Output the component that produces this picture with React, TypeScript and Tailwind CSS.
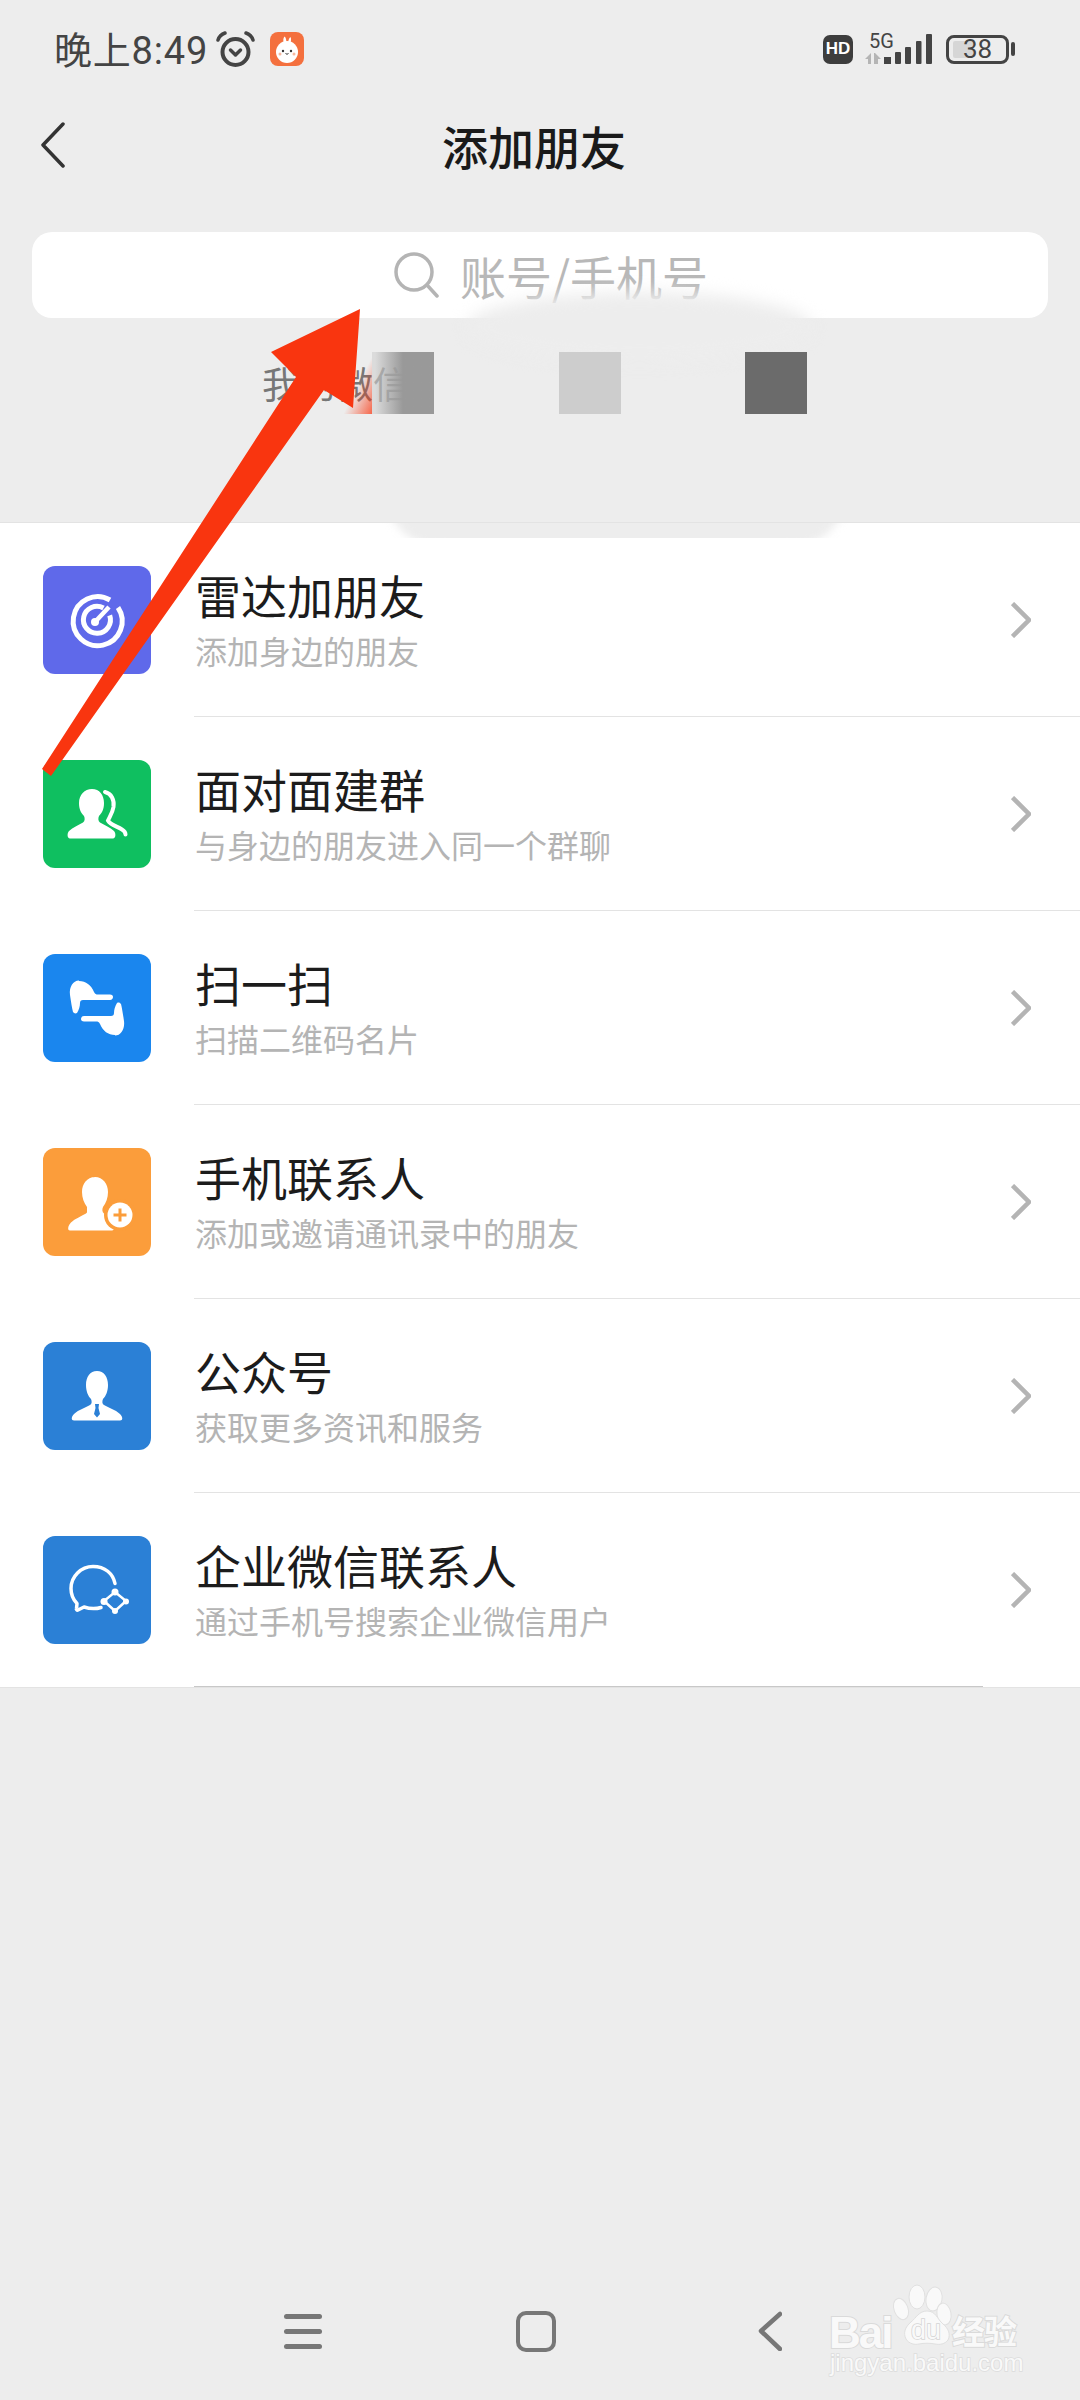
import React from "react";

const CJK = "font-['Noto_Sans_CJK_SC','Noto_Sans',sans-serif]";

function RadarIcon() {
  return (
    <svg viewBox="0 0 108 108" className="w-full h-full" fill="none" stroke="#fff" strokeLinecap="butt">
      <path d="M67 34A24.500 24.500 0 1 0 75 41.500" strokeWidth="5" />
      <path d="M60.500 42A13.500 13.500 0 1 0 66.700 49.400" strokeWidth="5" />
      <path d="M52 56L66 41" strokeWidth="4.500" />
      <circle cx="52" cy="56" r="4" fill="#fff" stroke="none" />
    </svg>
  );
}

function GroupIcon() {
  return (
    <svg viewBox="0 0 108 108" className="w-full h-full" fill="#fff">
      <path d="M49 29c-7.500 0-13 6-13 14 0 6 2 10 5 13 1 2 1 5-1 6.500-5 3-10 4.500-14 8.500-2 2-2 7.500 1 7.500h43c3 0 3-5.500 1-7.500-4-4-9-5.500-14-8.500-2-1.500-2-4.500-1-6.500 3-3 5-7 5-13 0-8-4.500-14-12-14z" />
      <path d="M62 32c6.500 1.500 9.500 8 8.500 15-1 6-4 10-5.500 13.500 2 4 8 5.500 14 9 2.500 1.500 3.500 3 3.500 5" fill="none" stroke="#fff" strokeWidth="4" strokeLinecap="round" />
    </svg>
  );
}

function ScanIcon() {
  const half = "M36 27c7 0 12 4 15 11 1 2 2 2.500 4 2.500h12c2 0 3 1 3 2.500s-1 3-3 3H40c-2 0-3 1-3 3 0 3-1 7-3 10-2 1-3 0-4-1-1-4-2-10-3-17-1-8 3-14.500 9-14.500z";
  return (
    <svg viewBox="0 0 108 108" className="w-full h-full" fill="#fff">
      <path d={half} />
      <path d={half} transform="rotate(180 54 54)" />
    </svg>
  );
}

function AddContactIcon() {
  return (
    <svg viewBox="0 0 108 108" className="w-full h-full">
      <path fill="#fff" d="M52 29c-8 0-13 7-13 15 0 6 2 11 5 15 1 2 1 5-1 6.500-5 3-11 5-15 9-3 3-4 8-1 8h42c3 0 3-5 1-8-4-4-9-6-15-9-2-1.500-2-4.500-1-6.500 3-4 5-9 5-15 0-8-5-15-8-15z" />
      <path fill="#fff" d="M52 29c8 0 13 7 13 15 0 6-2 11-5 15-1 2-1 5 1 6.500l6 4-5 12H44V60l8-31z" />
      <circle cx="77" cy="67" r="16" fill="#fb9d3b" />
      <circle cx="77" cy="67" r="12.500" fill="#fff" />
      <path d="M77 60.500v13M70.500 67h13" stroke="#fb9d3b" strokeWidth="3" />
    </svg>
  );
}

function OfficialIcon() {
  return (
    <svg viewBox="0 0 108 108" className="w-full h-full">
      <path fill="#fff" d="M54 29c-7 0-11 6-11 14 0 6 2 11 5 14 1 2 1 5-1 6-5 3-11 4.500-16 9-3 3-3 6.500 0 6.500h46c3 0 3-3.500 0-6.500-5-4.500-11-6-16-9-2-1-2-4-1-6 3-3 5-8 5-14 0-8-4-14-11-14z" />
      <path fill="#2b80d6" d="M52 62h4l-.5 4 1.500 6-3 3.500-3-3.500 1.500-6z" />
    </svg>
  );
}

function WorkChatIcon() {
  return (
    <svg viewBox="0 0 108 108" className="w-full h-full" fill="none" stroke="#fff">
      <path d="M58 71.500c-5 1.500-11 1.500-17-.5l-6 3c-1 .5-2-.5-1.500-1.500l.5-5c-4-4-6-9-6-15 0-12 10-22 22-22s20 7 22 17" strokeWidth="3.500" strokeLinecap="round" strokeLinejoin="round" />
      <path d="M72 56L83 65 72 75 61 65z" strokeWidth="2.500" />
      <circle cx="72" cy="56" r="3.500" fill="#fff" stroke="none" />
      <circle cx="83" cy="65.500" r="3" fill="#fff" stroke="none" />
      <circle cx="72" cy="75" r="3" fill="#fff" stroke="none" />
      <circle cx="61" cy="65.500" r="3.500" fill="#fff" stroke="none" />
    </svg>
  );
}

const rows = [
  { title: "雷达加朋友", sub: "添加身边的朋友", bg: "bg-[#5f69ea]", icon: <RadarIcon /> },
  { title: "面对面建群", sub: "与身边的朋友进入同一个群聊", bg: "bg-[#0fbf60]", icon: <GroupIcon /> },
  { title: "扫一扫", sub: "扫描二维码名片", bg: "bg-[#1a86ee]", icon: <ScanIcon /> },
  { title: "手机联系人", sub: "添加或邀请通讯录中的朋友", bg: "bg-[#fb9d3b]", icon: <AddContactIcon /> },
  { title: "公众号", sub: "获取更多资讯和服务", bg: "bg-[#2b80d6]", icon: <OfficialIcon /> },
  { title: "企业微信联系人", sub: "通过手机号搜索企业微信用户", bg: "bg-[#2b80d6]", icon: <WorkChatIcon /> },
];

function Chevron() {
  return (
    <svg width="20" height="36" viewBox="0 0 20 36" fill="none" stroke="#b4b4b4" strokeWidth="4.500">
      <path d="M1.500 1.500L18 18 1.500 34.500" />
    </svg>
  );
}

function StatusBar() {
  return (
    <div className="h-[98px] flex items-center pl-[54px] pr-[65px] text-[#444]">
      <span className="mt-[3px] text-[38px] leading-[44px] font-['Roboto','Noto_Sans_CJK_SC',sans-serif] tracking-[0.8px]">晚上8:49</span>
      <svg className="ml-[8px]" width="39" height="36" viewBox="0 0 39 36" fill="none" stroke="#444">
        <circle cx="19.500" cy="21" r="13" strokeWidth="4" />
        <path d="M2 9c1-3 4-6 7-7M37 9c-1-3-4-6-7-7" strokeWidth="3.500" strokeLinecap="round" />
        <path d="M14.500 19l5 5 5-5" strokeWidth="3.500" strokeLinecap="round" strokeLinejoin="round" />
      </svg>
      <svg className="ml-[15px]" width="34" height="34" viewBox="0 0 34 34">
        <rect width="34" height="34" rx="8" fill="#f4703e" />
        <path d="M14 12c-1-3-1-6 .5-7.500 1.500 1 2 4 2 7zM18 12c0-3 1-6 2.500-7 1 1.500.5 5-.5 7.500z" fill="#fff" />
        <circle cx="17" cy="20" r="11" fill="#fff" />
        <circle cx="13" cy="19" r="1.200" fill="#333" />
        <circle cx="21" cy="19" r="1.200" fill="#333" />
        <path d="M15.500 21.500q1.500 1.500 3 0" stroke="#333" strokeWidth="1" fill="none" />
        <circle cx="10" cy="22" r="1.500" fill="#f7b9a0" />
        <circle cx="24" cy="22" r="1.500" fill="#f7b9a0" />
      </svg>

      <div className="ml-auto flex items-center">
        <div className="w-[30px] h-[29px] rounded-[7px] bg-[#3d3d3d] flex items-center justify-center text-white text-[17px] font-bold font-['Liberation_Sans',sans-serif]">HD</div>
        <div className="relative ml-[12px] w-[67px] h-[31px]">
          <span className="absolute left-[4px] top-[-5px] text-[20px] leading-[24px] font-['Roboto',sans-serif]">5G</span>
          <svg width="67" height="31" viewBox="0 0 67 31" className="absolute left-0 top-0">
            <path d="M0 25l6-6v11H3v-5zM9 19h1l6 6h-3v5H9z" fill="#b5b5b5" />
            <rect x="19" y="23" width="7" height="7" fill="#444" />
            <rect x="30" y="18" width="6" height="12" rx="1" fill="#444" />
            <rect x="40" y="13" width="6" height="17" rx="1" fill="#444" />
            <rect x="51" y="7" width="5.500" height="23" rx="1" fill="#444" />
            <rect x="61" y="0" width="6" height="30" rx="1" fill="#444" />
          </svg>
        </div>
        <div className="relative ml-[14px] w-[63px] h-[29px] rounded-[8px] border-[3.5px] border-[#444] flex items-center justify-center">
          <div className="absolute left-[4px] top-[3px] bottom-[3px] w-[20px] rounded-[2px] bg-[#d6d6d6]" />
          <span className="relative text-[26px] leading-none font-['Roboto',sans-serif]">38</span>
        </div>
        <div className="ml-[2px] w-[4px] h-[14px] rounded-[2px] bg-[#444]" />
      </div>
    </div>
  );
}

function Arrow() {
  return (
    <svg className="absolute left-0 top-0 pointer-events-none" width="400" height="800" viewBox="0 0 400 800">
      <polygon points="360,309 271,352 296,377 42,769 51,776 324,390 353,408" fill="#f9350f" />
    </svg>
  );
}

function Watermark() {
  const outline = "text-[#f9f9f9] [-webkit-text-stroke:2px_#dadada] [paint-order:stroke_fill]";
  return (
    <div className="absolute left-[828px] top-[2284px] w-[196px] h-[96px]">
      <svg className="absolute left-0 top-0" width="196" height="70" viewBox="0 0 196 70" fill="#f9f9f9" stroke="#e0e0e0" strokeWidth="1">
        <ellipse cx="89" cy="13" rx="8" ry="12" />
        <ellipse cx="106" cy="15" rx="8" ry="12" transform="rotate(10 106 15)" />
        <ellipse cx="73" cy="25" rx="7" ry="11" transform="rotate(-20 73 25)" />
        <ellipse cx="116" cy="30" rx="7" ry="11" transform="rotate(-10 116 30)" />
        <path d="M99 27c-8 0-11 7-16 11-6 5-8 11-5 17 3 5 9 6 13 5 5-1 11-1 16 0 5 1 10 0 13-4 3-6 0-12-5-16-6-5-7-13-16-13z" />
      </svg>
      <span className={`absolute left-[1px] top-[30px] text-[44px] leading-[38px] font-bold tracking-[-2px] font-['Liberation_Sans',sans-serif] ${outline}`}>Bai</span>
      <span className="absolute left-[83px] top-[31px] text-[27px] leading-[30px] font-['Liberation_Sans',sans-serif] text-[#f9f9f9] [-webkit-text-stroke:1.500px_#d4d4d4] [paint-order:stroke_fill]">du</span>
      <span className={`absolute left-[124px] top-[28px] text-[33px] leading-[36px] font-bold tracking-[-1px] ${CJK} ${outline}`}>经验</span>
      <span className="absolute left-[2px] top-[69px] text-[24px] leading-[20px] font-['Liberation_Sans',sans-serif] text-[#f9f9f9] [-webkit-text-stroke:1.500px_#dcdcdc] [paint-order:stroke_fill]">jingyan.baidu.com</span>
    </div>
  );
}

export default function App() {
  return (
    <div className={`relative w-[1080px] h-[2400px] overflow-hidden bg-[#ededed] flex flex-col ${CJK}`}>
      <StatusBar />

      <header className="h-[98px] relative flex items-center justify-center pr-[12px] pb-[5px]">
        <svg className="absolute left-[40px] top-[24px]" width="26" height="46" viewBox="0 0 26 46" fill="none" stroke="#333" strokeWidth="3.500" strokeLinecap="round" strokeLinejoin="round">
          <path d="M23 2L3 23l20 21" />
        </svg>
        <h1 className="text-[46px] leading-[56px] font-medium text-[#1a1a1a]">添加朋友</h1>
      </header>

      <div className="relative mx-[32px] mt-[36px] h-[86px] rounded-[20px] bg-white flex items-center pl-[362px]">
        <svg width="46" height="46" viewBox="0 0 46 46" fill="none" stroke="#b4b4b4" strokeWidth="3.500" strokeLinecap="round">
          <circle cx="20" cy="20" r="18" />
          <path d="M33 33l10 11" />
        </svg>
        <span className="ml-[20px] text-[46px] leading-[56px] text-[#b8b8b8]">账号/手机号</span>
        <div className="absolute left-[435px] top-[60px] w-[345px] h-[70px] rounded-[50%] bg-[#ededed] blur-[8px]" />
      </div>

      <div className="relative z-10 mt-[34px] h-[62px] pl-[262px] flex items-center">
        <div className="w-[110px] whitespace-nowrap text-[37px] leading-[44px] text-[#777]">我的微信</div>
        <div className="relative w-[62px] h-[62px] bg-linear-to-r from-[#cfcfcf99] from-5% to-[#999999] to-50%" />
        <div className="ml-[125px] w-[62px] h-[62px] bg-[#cdcdcd]" />
        <div className="ml-[124px] w-[62px] h-[62px] bg-[#6b6b6b]" />
      </div>

      <div className="relative z-10 mt-[108px] bg-white border-t border-b border-t-[#e3e3e3] border-b-[#e3e3e3]">
        {rows.map((row, i) => {
          const last = i === rows.length - 1;
          return (
            <div key={row.title} className="h-[194px] flex">
              <div className="w-[194px] shrink-0 pl-[43px] flex items-center">
                <div className={`w-[108px] h-[108px] rounded-[12px] ${row.bg}`}>{row.icon}</div>
              </div>
              <div className={last ? "flex-1 flex items-center mr-[97px] border-b border-[#c8c8c8]" : "flex-1 flex items-center pr-[49px] border-b border-[#e3e3e3]"}>
                <div className="flex-1 min-w-0 flex flex-col pl-[1px] pb-[1px]">
                  <div className="text-[46px] leading-[52px] text-[#1c1c1c]">{row.title}</div>
                  <div className="mt-[10px] text-[32px] leading-[40px] text-[#b4b4b4]">{row.sub}</div>
                </div>
                <div className={last ? "-mr-[48px]" : ""}>
                  <Chevron />
                </div>
              </div>
            </div>
          );
        })}
      </div>

      {/* Rubbed-out patch across the top of the card */}
      <div className="absolute z-10 left-[370px] top-[523px] w-[500px] h-[15px] overflow-hidden">
        <div className="absolute left-[14px] right-[22px] top-[-50px] h-[75px] rounded-b-[60px] bg-[#ededed] blur-[4px]" />
      </div>

      <div className="mt-auto h-[116px] flex items-start pl-[284px] pt-[27px]">
        <div className="w-[38px] h-[35px] flex flex-col justify-between mt-[3px]">
          <div className="h-[5px] rounded-full bg-[#777]" />
          <div className="h-[5px] rounded-full bg-[#777]" />
          <div className="h-[5px] rounded-full bg-[#777]" />
        </div>
        <div className="ml-[194px] w-[40px] h-[41px] rounded-[10px] border-[4px] border-[#777]" />
        <svg className="ml-[202px]" width="24" height="40" viewBox="0 0 24 40" fill="none" stroke="#777" strokeWidth="4.500" strokeLinecap="round" strokeLinejoin="round">
          <path d="M22 3L3 20l19 18" />
        </svg>
      </div>

      {/* Faded edge where the red mark meets the first tile */}
      <div className="absolute z-20 left-[340px] top-[350px] w-[32px] h-[64px] bg-linear-to-br from-transparent from-55% to-[#f9350fbb]" />
      <div className="absolute inset-0 z-30 pointer-events-none">
        <Arrow />
      </div>
      <Watermark />
    </div>
  );
}
